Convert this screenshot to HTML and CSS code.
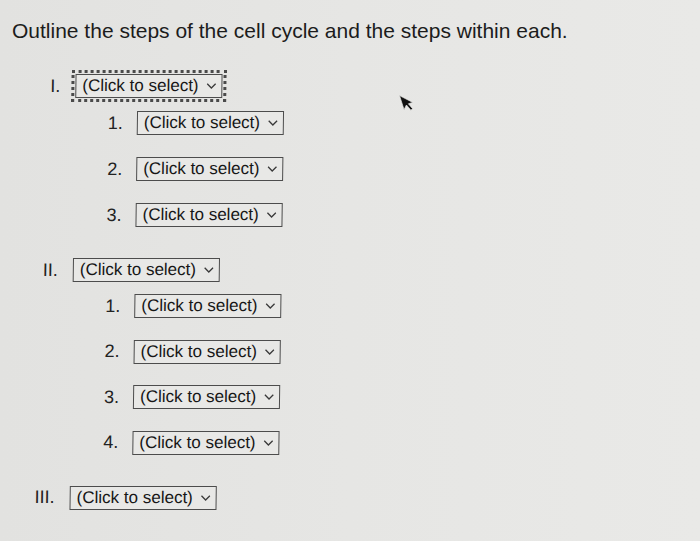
FILE: index.html
```html
<!DOCTYPE html>
<html lang="en">
<head>
<meta charset="utf-8">
<title>Cell cycle outline</title>
<link rel="stylesheet" href="styles.css">
</head>
<body>
<div class="page">
  <p class="title">Outline the steps of the cell cycle and the steps within each.</p>

  <div class="outline">
    <div class="section">
      <div class="row">
        <span class="label roman">I.</span>
        <span class="select focused">(Click to select)<svg class="chev" viewBox="0 0 10 6"><path d="M0.8 0.8 L5 5 L9.2 0.8"/></svg></span>
      </div>
      <div class="sub">
        <div class="row"><span class="label num">1.</span><span class="select">(Click to select)<svg class="chev" viewBox="0 0 10 6"><path d="M0.8 0.8 L5 5 L9.2 0.8"/></svg></span></div>
        <div class="row"><span class="label num">2.</span><span class="select">(Click to select)<svg class="chev" viewBox="0 0 10 6"><path d="M0.8 0.8 L5 5 L9.2 0.8"/></svg></span></div>
        <div class="row"><span class="label num">3.</span><span class="select">(Click to select)<svg class="chev" viewBox="0 0 10 6"><path d="M0.8 0.8 L5 5 L9.2 0.8"/></svg></span></div>
      </div>
    </div>

    <div class="section">
      <div class="row">
        <span class="label roman">II.</span>
        <span class="select">(Click to select)<svg class="chev" viewBox="0 0 10 6"><path d="M0.8 0.8 L5 5 L9.2 0.8"/></svg></span>
      </div>
      <div class="sub sub-tight">
        <div class="row"><span class="label num">1.</span><span class="select">(Click to select)<svg class="chev" viewBox="0 0 10 6"><path d="M0.8 0.8 L5 5 L9.2 0.8"/></svg></span></div>
        <div class="row"><span class="label num">2.</span><span class="select">(Click to select)<svg class="chev" viewBox="0 0 10 6"><path d="M0.8 0.8 L5 5 L9.2 0.8"/></svg></span></div>
        <div class="row"><span class="label num">3.</span><span class="select">(Click to select)<svg class="chev" viewBox="0 0 10 6"><path d="M0.8 0.8 L5 5 L9.2 0.8"/></svg></span></div>
        <div class="row"><span class="label num">4.</span><span class="select">(Click to select)<svg class="chev" viewBox="0 0 10 6"><path d="M0.8 0.8 L5 5 L9.2 0.8"/></svg></span></div>
      </div>
    </div>

    <div class="section">
      <div class="row">
        <span class="label roman">III.</span>
        <span class="select">(Click to select)<svg class="chev" viewBox="0 0 10 6"><path d="M0.8 0.8 L5 5 L9.2 0.8"/></svg></span>
      </div>
    </div>
  </div>

  <svg class="cursor" viewBox="0 0 12 19"><path d="M1 1 L1 15 L4.5 11.5 L7 17.5 L9 16.6 L6.6 11 L11 11 Z"/></svg>
</div>
</body>
</html>
```

FILE: styles.css
```css
html, body {
  margin: 0;
  padding: 0;
}

body {
  background: #e5e5e3;
  color: #161616;
  font-family: "Liberation Sans", Arial, sans-serif;
}

.page {
  position: relative;
  width: 700px;
  height: 541px;
  overflow: hidden;
  background: linear-gradient(90deg, #e2e2e0 0%, #e6e6e4 50%, #e9e9e7 100%);
}

.title {
  margin: 0;
  padding: 18px 0 0 12px;
  font-size: 21px;
  line-height: 25px;
  color: #1c1c1c;
}

.outline {
  display: flex;
  flex-direction: column;
  padding-left: 33px;
  transform: skewX(-0.8deg);
  transform-origin: 0 0;
}

.section {
  display: flex;
  flex-direction: column;
  margin-top: 31px;
}

.row {
  display: flex;
  align-items: center;
  height: 24px;
}

.label {
  font-size: 18px;
  text-align: right;
  flex: none;
  color: #222;
}

.roman {
  width: 28px;
  margin-right: 15px;
}

.sub {
  display: flex;
  flex-direction: column;
  gap: 22px;
  margin-top: 13px;
  padding-left: 59px;
}

.sub-tight {
  margin-top: 12px;
  gap: 21.5px;
}

.num {
  width: 32px;
  margin-right: 14px;
}

.select {
  box-sizing: border-box;
  display: inline-flex;
  align-items: center;
  height: 24px;
  padding: 0 5px 0 6px;
  border: 1px solid #4c4c4c;
  background: #e8e8e6;
  font-size: 17px;
  color: #161616;
  white-space: nowrap;
}

.focused {
  outline: 3px dotted #4a4a4a;
  outline-offset: 1px;
}

.chev {
  width: 10px;
  height: 6px;
  margin-left: 8px;
  fill: none;
  stroke: #3a3a3a;
  stroke-width: 1.3;
}

.cursor {
  position: absolute;
  left: 398px;
  top: 95px;
  width: 13px;
  height: 20px;
  transform: rotate(-18deg);
  transform-origin: 0 0;
  fill: #111;
  stroke: #e5e5e3;
  stroke-width: 0.6;
}
```
